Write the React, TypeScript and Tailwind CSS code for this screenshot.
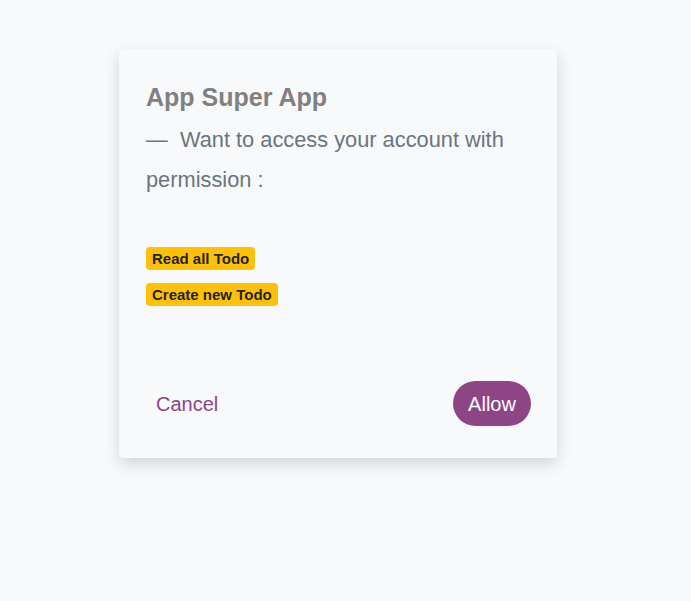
import React from "react";

export default function App() {
  return (
    <div className="min-h-[601px] w-full bg-[#f8f9fb] pt-[49px] pl-[119px]" style={{ fontFamily: '"Liberation Sans", Arial, sans-serif' }}>
      <div className="w-[438px] h-[409px] bg-[#f8f9fb] rounded-[4px] shadow-[0_6px_16px_rgba(0,0,0,0.15)] pt-[34px] px-[27px] pb-[32px] flex flex-col">
        <h1 className="text-[25px] leading-[29px] font-bold text-[#808080]">App Super App</h1>
        <p className="mt-[8px] text-[21.8px] leading-[40px] text-[#6c757d]">
          —&nbsp; Want to access your account with permission :
        </p>
        <div className="mt-[47px] flex flex-col items-start gap-[13px]">
          <span className="bg-[#ffc107] text-[#212529] text-[15px] leading-[23px] font-bold px-[6px] rounded-[4px]">Read all Todo</span>
          <span className="bg-[#ffc107] text-[#212529] text-[15px] leading-[23px] font-bold px-[6px] rounded-[4px]">Create new Todo</span>
        </div>
        <div className="mt-auto flex items-center justify-between">
          <button className="h-[45px] px-[10px] text-[20px] text-[#8e4585]">Cancel</button>
          <button className="h-[45px] w-[78px] rounded-full bg-[#8e4585] text-white text-[20px] mr-[-1px]">Allow</button>
        </div>
      </div>
    </div>
  );
}
